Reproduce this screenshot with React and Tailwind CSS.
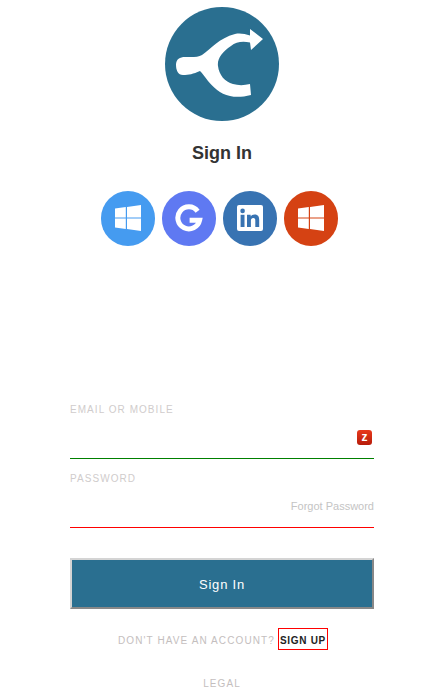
import React from 'react';

const WindowsIcon = () => (
  <svg viewBox="0 0 26 26" className="w-[26px] h-[26px]">
    <path fill="#fff" d="M0 3.600 10.800 2.100V12.400H0zM12 1.900 26 0V12.400H12zM0 13.600H10.800V23.900L0 22.400zM12 13.600H26V26L12 24.100z" />
  </svg>
);

const GoogleIcon = () => (
  <svg viewBox="0 0 28 28" className="w-[28px] h-[28px]">
    <path fill="none" stroke="#fff" strokeWidth="5" d="M22.600 7.200A11 11 0 1 0 24.600 16.200H14.600" />
  </svg>
);

const LinkedinIcon = () => (
  <svg viewBox="0 0 26 26" className="w-[26px] h-[26px]">
    <rect width="26" height="26" rx="2" fill="#fff" />
    <rect x="3.600" y="9.800" width="3.900" height="12.200" fill="#3873b2" />
    <circle cx="5.600" cy="5.900" r="2.300" fill="#3873b2" />
    <path fill="#3873b2" d="M10 9.800h3.700v1.700c.6-1.100 2-2 3.900-2 3.700 0 4.600 2.400 4.600 5.600V22h-3.900v-6.100c0-1.500-.2-3-2-3-1.900 0-2.400 1.400-2.400 3V22H10z" />
  </svg>
);

const Logo = () => (
  <svg viewBox="0 0 114 114" className="w-[114px] h-[114px]">
    <circle cx="57" cy="57" r="57" fill="#2a6f90" />
    <path
      fill="#fff"
      d="M11 58C11 52 15 50 20 50C27 50 33 50.500 37 48C46 42 54 31 70 27C75 26 80 27 85 28.500L85 22L98 32L86 43L85 35.500C77 34 71 35 66 39C57 45 52 52 53 59C54 68 60 75 68 77C73 78.500 79 78.500 85 77L86 88C78 90 71 90.500 65 89C55 87 48 80 43 74C40 70 37 66 35 64C28 67 24 68 18 68C13 68 11 63 11 58Z"
    />
  </svg>
);

export default function App() {
  return (
    <div className="w-[424px] h-[692px] overflow-hidden bg-white pl-[20px] font-['Liberation_Sans',Arial,sans-serif] flex flex-col items-center">
      <div className="mt-[7px]"><Logo /></div>
      <h1 className="mt-[21px] text-[18px] leading-[22px] font-bold text-[#333]">Sign In</h1>

      <div className="mt-[27px] mr-[5px] flex gap-[6.500px]">
        <div className="w-[54.500px] h-[54.500px] rounded-full bg-[#459bf0] flex items-center justify-center"><WindowsIcon /></div>
        <div className="w-[54.500px] h-[54.500px] rounded-full bg-[#5f79f2] flex items-center justify-center"><GoogleIcon /></div>
        <div className="w-[54.500px] h-[54.500px] rounded-full bg-[#3873b2] flex items-center justify-center"><LinkedinIcon /></div>
        <div className="w-[54.500px] h-[54.500px] rounded-full bg-[#d54213] flex items-center justify-center"><WindowsIcon /></div>
      </div>

      <div className="mt-[157.500px] w-[304px]">
        <label className="block pt-[1px] text-[10px] leading-[12px] tracking-[1.050px] text-[#d0cccc]">EMAIL OR MOBILE</label>
        <div className="h-[43px] flex items-center justify-end border-b border-[#008000] pr-[2px]">
          <span className="w-[15px] h-[15px] rounded-[3px] bg-gradient-to-b from-[#e8391c] to-[#b71c0a] flex items-center justify-center text-[12px] leading-none font-bold text-white">z</span>
        </div>

        <label className="block mt-[13px] pt-[1px] text-[10px] leading-[12px] tracking-[1.050px] text-[#d0cccc]">PASSWORD</label>
        <div className="h-[43px] flex items-center justify-end border-b border-[#ff0000]">
          <span className="text-[11px] text-[#c4c4c4]">Forgot Password</span>
        </div>

        <button className="mt-[30px] w-full h-[51px] pt-[3px] bg-[#2a6f90] border-2 border-t-[#d4d4d4] border-l-[#d4d4d4] border-r-[#888] border-b-[#888] text-white text-[13px] tracking-[0.800px]">Sign In</button>

        <div className="mt-[19px] pl-[2px] flex items-center justify-center text-[10px] tracking-[1.100px]">
          <span className="text-[#c4bebe] mr-[3px] pt-[3px]">DON'T HAVE AN ACCOUNT?</span>
          <a className="border border-[#ff0000] h-[22px] px-[1px] pt-[3px] flex items-center font-bold tracking-[0.700px] text-[#222]">SIGN UP</a>
        </div>

        <div className="mt-[28px] text-center text-[10px] leading-[12px] tracking-[1.100px] text-[#c4bebe]">LEGAL</div>
      </div>
    </div>
  );
}
